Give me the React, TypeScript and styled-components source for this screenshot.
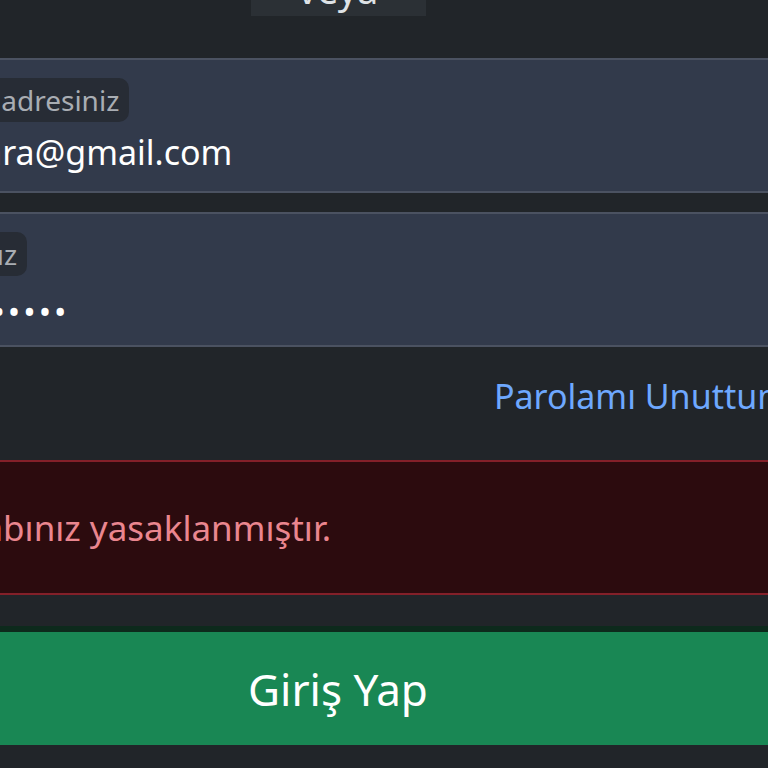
import styled, { createGlobalStyle } from 'styled-components';

const GlobalStyle = createGlobalStyle`
    html, body {
        margin: 0;
        background: #212529;
        overflow: hidden;
    }
    body {
        font-family: 'Noto Sans', 'Open Sans', sans-serif;
        color: #dee2e6;
    }
`;

const App = () => {
    return (
        <>
            <GlobalStyle />
            <Page>
                <Divider>
                    <DividerText>veya</DividerText>
                </Divider>
                <Field>
                    <FloatLabel>E-posta adresiniz</FloatLabel>
                    <FieldValue>nurzehra@gmail.com</FieldValue>
                </Field>
                <Field $gap>
                    <FloatLabel>Parolanız</FloatLabel>
                    <FieldValue $secret>•••••••••••</FieldValue>
                </Field>
                <LinkRow>
                    <ForgotLink href="#">Parolamı Unuttum</ForgotLink>
                </LinkRow>
                <Alert>Hesabınız yasaklanmıştır.</Alert>
                <SubmitButton type="button">Giriş Yap</SubmitButton>
            </Page>
        </>
    );
};

export default App;

const Page = styled.main`
    display: flex;
    flex-direction: column;
    width: 924px;
    margin-left: -124px;
`;

const Divider = styled.div`
    display: flex;
    justify-content: center;
    margin-top: -30px;
`;

const DividerText = styled.span`
    display: flex;
    align-items: flex-end;
    justify-content: center;
    width: 175px;
    height: 46px;
    background: #2b3035;
    font-size: 38px;
    line-height: 1;
    color: #dee2e6;
    padding-bottom: 8px;
    box-sizing: border-box;
`;

const Field = styled.div<{ $gap?: boolean }>`
    position: relative;
    height: 135px;
    box-sizing: border-box;
    margin-top: ${({ $gap }) => ($gap ? '19px' : '42px')};
    background: #323a4b;
    border: 2px solid #4b5261;
    border-radius: 12px;
    padding: 68px 12px 0;
`;

const FloatLabel = styled.label`
    position: absolute;
    top: 18px;
    left: 8px;
    height: 44px;
    display: flex;
    align-items: center;
    padding: 0 10px;
    border-radius: 10px;
    background: #272c35;
    font-size: 28px;
    color: #a9adb3;
`;

const FieldValue = styled.div<{ $secret?: boolean }>`
    font-size: ${({ $secret }) => ($secret ? '33px' : '34px')};
    line-height: 48px;
    color: #ffffff;
    letter-spacing: ${({ $secret }) => ($secret ? '3px' : '0')};
    margin-top: ${({ $secret }) => ($secret ? '6px' : '0')};
    margin-left: ${({ $secret }) => ($secret ? '10px' : '0')};
`;

const LinkRow = styled.div`
    display: flex;
    justify-content: flex-end;
    align-items: center;
    height: 113px;
    padding-right: 11px;
    padding-bottom: 16px;
    box-sizing: border-box;
`;

const ForgotLink = styled.a`
    font-size: 34px;
    color: #6ea8fe;
    text-decoration: none;
`;

const Alert = styled.div`
    height: 135px;
    box-sizing: border-box;
    display: flex;
    align-items: center;
    padding: 0 43px;
    background: #2c0b0e;
    border: 2px solid #842029;
    border-radius: 12px;
    font-size: 35px;
    color: #ea868f;
`;

const SubmitButton = styled.button`
    margin-top: 37px;
    height: 113px;
    border: none;
    border-radius: 12px;
    background: #198754;
    box-shadow: 0 -6px 0 #0d2a1c;
    font-family: 'Noto Sans', 'Open Sans', sans-serif;
    font-size: 44px;
    color: #ffffff;
    padding: 0;
`;
